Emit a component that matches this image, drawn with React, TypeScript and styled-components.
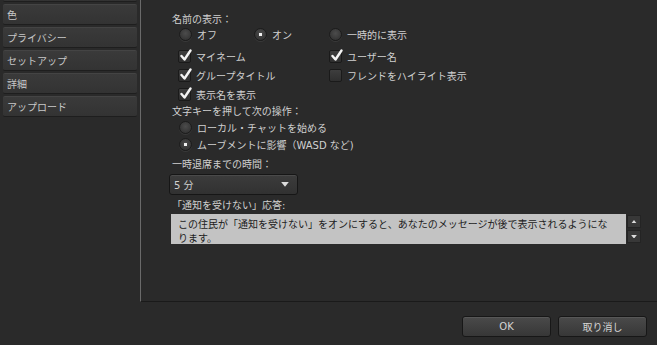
import React from 'react';
import styled, { createGlobalStyle } from 'styled-components';

const GlobalStyle = createGlobalStyle`
  html, body {
    margin: 0;
    padding: 0;
    background: #2a2a2a;
  }
  body {
    font-family: "DejaVu Sans", "Noto Sans CJK JP", sans-serif;
  }
`;

const Window = styled.div`
  width: 657px;
  height: 345px;
  display: flex;
  flex-direction: column;
  background: #2a2a2a;
  color: #d0d0d0;
  font-size: 10px;
  overflow: hidden;
`;

const Main = styled.div`
  display: flex;
  height: 302px;
`;

const Sidebar = styled.nav`
  width: 140px;
  flex: none;
  overflow: hidden;
`;

const TabList = styled.div`
  display: flex;
  flex-direction: column;
  gap: 2px;
  margin-top: -19px;
  padding-left: 3px;
`;

const Tab = styled.div`
  width: 134px;
  height: 21px;
  box-sizing: border-box;
  display: flex;
  align-items: center;
  padding-left: 4px;
  background: linear-gradient(#3a3a3a, #333333);
  border-top: 1px solid #444;
  border-bottom: 1px solid #1e1e1e;
  border-radius: 2px;
  color: #c8c8c8;
`;

const Panel = styled.section`
  flex: 1;
  border-left: 1px solid #6a6a6a;
  border-bottom: 1px solid #1a1a1a;
  padding: 12px 0 0 31px;
  display: flex;
  flex-direction: column;
  align-items: flex-start;
`;

const Label = styled.div<{ $mt?: number }>`
  height: 15px;
  line-height: 15px;
  margin-top: ${p => p.$mt ?? 0}px;
  white-space: nowrap;
`;

const RadioRow = styled.div<{ $h?: number }>`
  display: flex;
  align-items: center;
  height: ${p => p.$h ?? 14}px;
  margin-left: 7px;
`;

const RadioItem = styled.label`
  display: flex;
  align-items: center;
  gap: 5px;
  width: 75px;
  white-space: nowrap;
`;

const RadioDot = styled.span<{ $on?: boolean }>`
  width: 13px;
  height: 13px;
  box-sizing: border-box;
  border-radius: 50%;
  background: radial-gradient(circle at 50% 40%, #4c4c4c, #2c2c2c);
  border: 1px solid #1c1c1c;
  box-shadow: 0 1px 0 #3a3a3a;
  display: flex;
  align-items: center;
  justify-content: center;
  flex: none;

  &::after {
    content: "";
    width: 3px;
    height: 3px;
    background: #f0f0f0;
    display: ${p => (p.$on ? 'block' : 'none')};
  }
`;

const CheckGrid = styled.div`
  display: grid;
  grid-template-columns: 151px 151px;
  grid-auto-rows: 19px;
  margin: 6px 0 0 6px;
`;

const CheckItem = styled.label`
  display: flex;
  align-items: center;
  gap: 5px;
  white-space: nowrap;
`;

const Box = styled.span`
  width: 13px;
  height: 13px;
  box-sizing: border-box;
  background: linear-gradient(#3e3e3e, #2f2f2f);
  border: 1px solid #1a1a1a;
  border-radius: 2px;
  position: relative;
  flex: none;

  svg {
    position: absolute;
    left: 0;
    top: -2px;
  }
`;

const Select = styled.div`
  margin: 2px 0 0 -3px;
  width: 129px;
  height: 21px;
  box-sizing: border-box;
  display: flex;
  align-items: center;
  justify-content: space-between;
  padding: 0 8px 0 4px;
  background: linear-gradient(#3c3c3c, #313131);
  border: 1px solid #161616;
  border-radius: 3px;
  box-shadow: inset 0 1px 0 #4a4a4a;
`;

const ResponseRow = styled.div`
  display: flex;
  gap: 1px;
  margin: 1px 0 0 -1px;
`;

const ResponseText = styled.div`
  width: 455px;
  height: 30px;
  box-sizing: border-box;
  padding: 4px 10px 0 7px;
  background: #c3c3c3;
  color: #1c1c1c;
  line-height: 14px;
  overflow: hidden;
`;

const ScrollCol = styled.div`
  display: flex;
  flex-direction: column;
  gap: 2px;
  padding-top: 1px;
`;

const ScrollBtn = styled.div`
  width: 14px;
  height: 13px;
  background: #383838;
  border: 1px solid #242424;
  box-sizing: border-box;
  display: flex;
  align-items: center;
  justify-content: center;
`;

const Footer = styled.footer`
  display: flex;
  justify-content: flex-end;
  gap: 7px;
  padding: 14px 10px 0 0;
`;

const Button = styled.button`
  width: 89px;
  height: 21px;
  box-sizing: border-box;
  background: linear-gradient(#4a4a4a, #373737);
  border: 1px solid #171717;
  border-radius: 3px;
  box-shadow: inset 0 1px 0 #575757;
  color: #d4d4d4;
  font: inherit;
  font-size: 10px;
  padding: 0;
`;

const Check = () => (
  <svg width="13" height="13" viewBox="0 0 13 13">
    <path d="M2.5 7 L5.5 10.5 L11.5 1.5" fill="none" stroke="#f4f4f4" strokeWidth="2.4" strokeLinecap="round" strokeLinejoin="round" />
  </svg>
);

const Tri = ({ up, w = 8 }: { up?: boolean; w?: number }) => (
  <svg width={w} height={w * 0.6} viewBox="0 0 8 5">
    <path d={up ? 'M0 5 L4 0 L8 5 Z' : 'M0 0 L8 0 L4 5 Z'} fill="#dcdcdc" />
  </svg>
);

const Checkbox = ({ label, on }: { label: string; on?: boolean }) => (
  <CheckItem>
    <Box>{on && <Check />}</Box>
    {label}
  </CheckItem>
);

const Radio = ({ label, on }: { label: string; on?: boolean }) => (
  <RadioItem>
    <RadioDot $on={on} />
    {label}
  </RadioItem>
);

const tabs = ['', '色', 'プライバシー', 'セットアップ', '詳細', 'アップロード'];

export default function App() {
  return (
    <Window>
      <GlobalStyle />
      <Main>
        <Sidebar>
          <TabList>
            {tabs.map((t, i) => (
              <Tab key={i}>{t}</Tab>
            ))}
          </TabList>
        </Sidebar>
        <Panel>
          <Label>名前の表示：</Label>
          <RadioRow>
            <Radio label="オフ" />
            <Radio label="オン" on />
            <Radio label="一時的に表示" />
          </RadioRow>
          <CheckGrid>
            <Checkbox label="マイネーム" on />
            <Checkbox label="ユーザー名" on />
            <Checkbox label="グループタイトル" on />
            <Checkbox label="フレンドをハイライト表示" />
            <Checkbox label="表示名を表示" on />
          </CheckGrid>
          <Label>文字キーを押して次の操作：</Label>
          <RadioRow $h={17}>
            <Radio label="ローカル・チャットを始める" />
          </RadioRow>
          <RadioRow $h={17}>
            <Radio label="ムーブメントに影響（WASD など)" on />
          </RadioRow>
          <Label $mt={4}>一時退席までの時間：</Label>
          <Select>
            <span>5 分</span>
            <Tri />
          </Select>
          <Label $mt={3}>「通知を受けない」応答:</Label>
          <ResponseRow>
            <ResponseText>
              この住民が「通知を受けない」をオンにすると、あなたのメッセージが後で表示されるようになります。
            </ResponseText>
            <ScrollCol>
              <ScrollBtn>
                <Tri up w={6} />
              </ScrollBtn>
              <ScrollBtn>
                <Tri w={6} />
              </ScrollBtn>
            </ScrollCol>
          </ResponseRow>
        </Panel>
      </Main>
      <Footer>
        <Button>OK</Button>
        <Button>取り消し</Button>
      </Footer>
    </Window>
  );
}
